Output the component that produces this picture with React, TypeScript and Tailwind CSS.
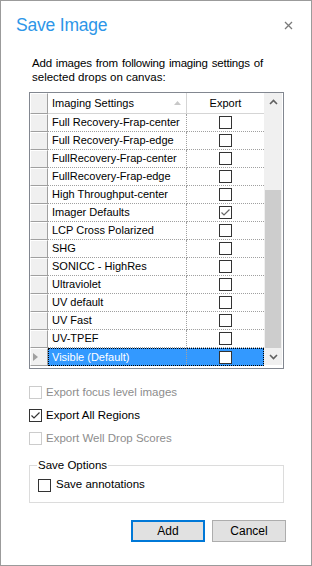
const rows = [
  'Full Recovery-Frap-center',
  'Full Recovery-Frap-edge',
  'FullRecovery-Frap-center',
  'FullRecovery-Frap-edge',
  'High Throughput-center',
  'Imager Defaults',
  'LCP Cross Polarized',
  'SHG',
  'SONICC - HighRes',
  'Ultraviolet',
  'UV default',
  'UV Fast',
  'UV-TPEF',
  'Visible (Default)',
];

const sans = { fontFamily: '"Liberation Sans", Arial, sans-serif' };

function Check({ color = '#555' }: { color?: string }) {
  return (
    <svg width="11" height="11" viewBox="0 0 11 11" className="block">
      <path d="M1.5 5.5 L4 8 L9.5 2.5" fill="none" stroke={color} strokeWidth="1.2" />
    </svg>
  );
}

function Box({ checked, disabled, grid }: { checked?: boolean; disabled?: boolean; grid?: boolean }) {
  return (
    <div
      className={`w-[13px] h-[13px] flex items-center justify-center bg-white border ${
        disabled ? 'border-[#cccccc]' : 'border-[#333333]'
      }`}
    >
      {checked && <Check color={grid ? '#666' : '#333'} />}
    </div>
  );
}

function ImagingGrid() {
  return (
    <div className="ml-[28px] mt-[8px] w-[255px] h-[277px] border border-[#828790] flex bg-white">
      <div className="w-[234px] flex flex-col">
        {/* header */}
        <div className="flex h-[21px] text-[11px] text-[#000]">
          <div className="w-[18px] bg-[#f0f0f0] border-r border-b border-[#a0a0a0] border-l border-t border-l-white border-t-white" />
          <div className="w-[139px] flex items-center justify-between pl-[4px] pr-[5px] bg-white border-r border-b border-[#d5d5d5]">
            <span>Imaging Settings</span>
            <svg width="7" height="4" viewBox="0 0 7 4">
              <path d="M0 4 L3.5 0 L7 4 Z" fill="#c8c8c8" />
            </svg>
          </div>
          <div className="w-[77px] flex items-center justify-center bg-white border-b border-[#d5d5d5]">
            Export
          </div>
        </div>
        {rows.map((r, i) => {
          const sel = i === rows.length - 1;
          return (
            <div key={r} className="flex h-[18px] text-[11px]">
              <div className="w-[18px] bg-[#f0f0f0] border-l border-t border-l-white border-t-white border-r border-b border-r-[#a0a0a0] border-b-[#a0a0a0] flex items-center pl-[2px]">
                {sel && (
                  <svg width="5" height="8" viewBox="0 0 5 8">
                    <path d="M0 0 L5 4 L0 8 Z" fill="#a0a0a0" />
                  </svg>
                )}
              </div>
              {sel ? (
                <div className="flex w-[216px] bg-[#3399ff] border border-dotted border-black">
                  <div className="w-[138px] pl-[3px] flex items-center text-white border-r border-dotted border-[#a0a0a0]">
                    {r}
                  </div>
                  <div className="flex-1 flex items-center justify-center">
                    <Box grid />
                  </div>
                </div>
              ) : (
                <>
                  <div className="w-[139px] pl-[4px] flex items-center text-[#000] border-r border-b border-dotted border-[#a0a0a0]">
                    {r}
                  </div>
                  <div className="w-[77px] flex items-center justify-center border-b border-dotted border-[#a0a0a0]">
                    <Box grid checked={r === 'Imager Defaults'} />
                  </div>
                </>
              )}
            </div>
          );
        })}
      </div>
      {/* scrollbar */}
      <div className="w-[18px] h-[272px] bg-[#f0f0f0] flex flex-col">
        <div className="h-[18px] flex items-center justify-center">
          <svg width="9" height="6" viewBox="0 0 9 6">
            <path d="M1 5 L4.5 1.5 L8 5" fill="none" stroke="#606060" strokeWidth="1.6" />
          </svg>
        </div>
        <div className="h-[79px]" />
        <div className="h-[158px] mx-[1px] bg-[#cdcdcd]" />
        <div className="flex-1 flex items-center justify-center">
          <svg width="9" height="6" viewBox="0 0 9 6">
            <path d="M1 1 L4.5 4.5 L8 1" fill="none" stroke="#606060" strokeWidth="1.6" />
          </svg>
        </div>
      </div>
    </div>
  );
}

function Option({ label, checked, disabled }: { label: string; checked?: boolean; disabled?: boolean }) {
  return (
    <div className="flex items-center h-[23px] ml-[28px] gap-[4px]">
      <Box checked={checked} disabled={disabled} />
      <span className={`text-[11.5px] ${disabled ? 'text-[#8d8d8d]' : 'text-[#000]'}`}>{label}</span>
    </div>
  );
}

export default function App() {
  return (
    <div className="w-[312px] h-[566px] bg-white border border-[#9b9b9b] flex flex-col" style={sans}>
      <div className="flex items-center justify-between pl-[15px] pr-[18px] pt-[11px]">
        <span className="text-[17.5px] leading-[26px] text-[#2d96e8] tracking-[-0.2px]">Save Image</span>
        <svg width="9" height="9" viewBox="0 0 9 9">
          <path d="M1 1 L8 8 M8 1 L1 8" stroke="#7a7a7a" strokeWidth="1.3" />
        </svg>
      </div>

      <div className="mt-[18px] ml-[31px] w-[231px] text-[11.5px] leading-[14px] text-[#000]">
        <div className="whitespace-nowrap text-justify [text-align-last:justify] tracking-[-0.2px]">
          Add images from following imaging settings of
        </div>
        <div>selected drops on canvas:</div>
      </div>

      <ImagingGrid />

      <div className="mt-[12px]">
        <Option label="Export focus level images" disabled />
        <Option label="Export All Regions" checked />
        <Option label="Export Well Drop Scores" disabled />
      </div>

      <fieldset className="ml-[28px] mt-[7px] w-[255px] border border-[#dcdcdc] pl-[8px] pb-[6px]">
        <legend className="text-[11.5px] leading-[16px] px-[1px] -ml-[1px]">Save Options</legend>
        <div className="flex items-center h-[22px] mt-[1px] gap-[5px]">
          <Box />
          <span className="text-[11.5px]">Save annotations</span>
        </div>
      </fieldset>

      <div className="flex justify-end gap-[7px] pr-[25px] mt-[17px]">
        <button className="w-[74px] h-[22px] bg-[#e1e1e1] border-2 border-[#0078d7] text-[12px] text-black">
          Add
        </button>
        <button className="w-[74px] h-[22px] bg-[#e1e1e1] border border-[#adadad] text-[12px] text-black">
          Cancel
        </button>
      </div>
    </div>
  );
}
